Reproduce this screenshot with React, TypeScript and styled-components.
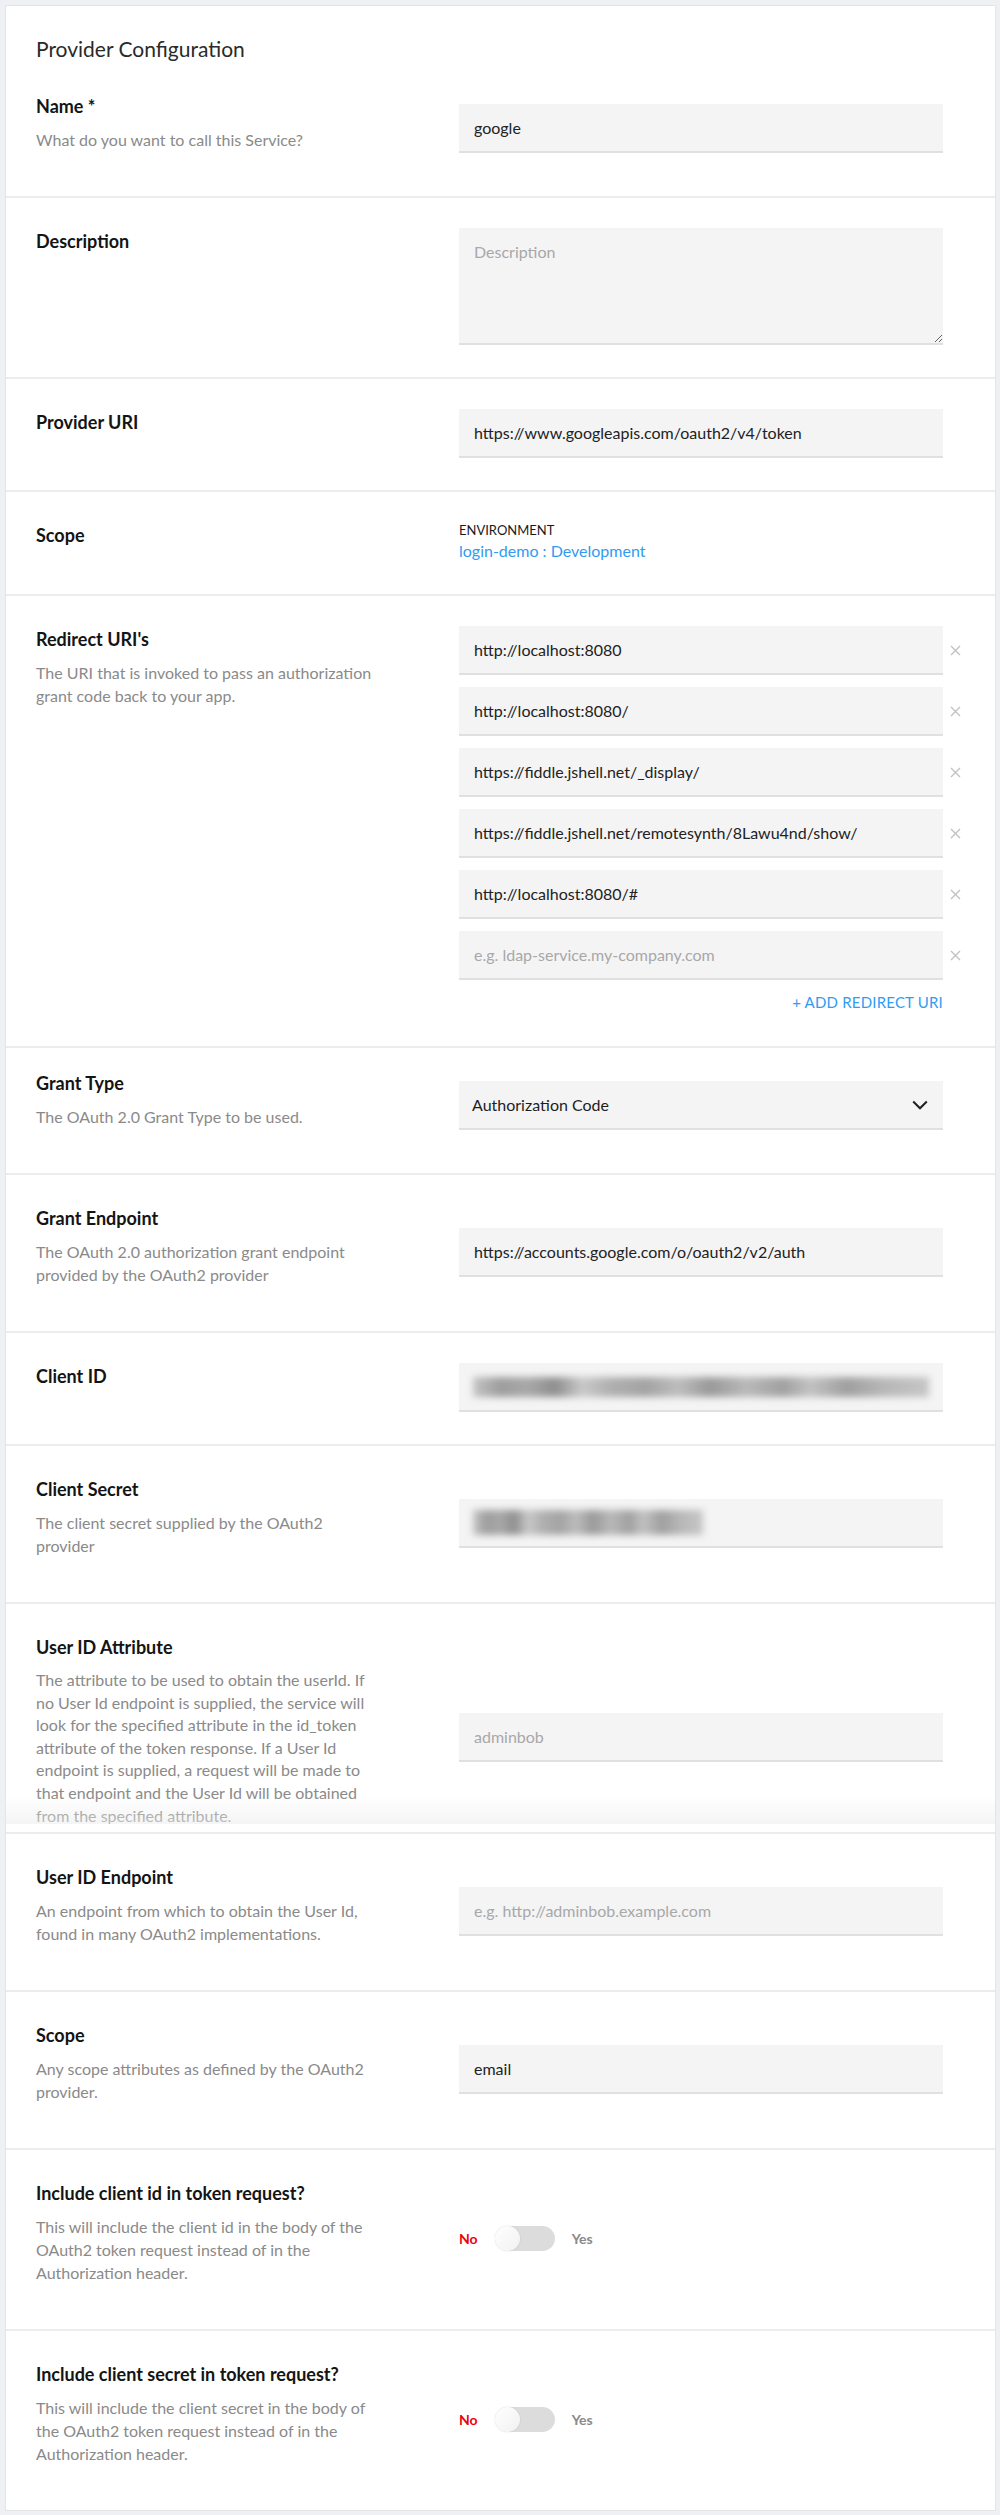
import * as React from "react";
import styled, { createGlobalStyle } from "styled-components";

const GlobalStyle = createGlobalStyle`
  html, body {
    margin: 0;
    background: #eef0f4;
  }
  body {
    padding: 5px 4px 2px 5px;
    font-family: Lato, "Liberation Sans", sans-serif;
    color: #222;
    -webkit-font-smoothing: antialiased;
  }
  * {
    box-sizing: border-box;
  }
`;

const SCard = styled.div`
  background: #fff;
  border: 1px solid #e3e5e9;
`;

const STitle = styled.h2`
  margin: 0;
  padding: 29px 30px 0;
  font-size: 21px;
  line-height: 28px;
  font-weight: 400;
  color: #2a2a2a;
`;

const SSection = styled.section<{ $clip?: boolean }>`
  border-bottom: 2px solid #ececec;
  padding-bottom: ${(p) => (p.$clip ? "8px" : "0")};
  &:last-child {
    border-bottom: 0;
  }
`;

const SClipWindow = styled.div`
  position: relative;
  height: 220px;
  overflow: hidden;
  &::after {
    content: "";
    position: absolute;
    left: 0;
    right: 0;
    bottom: 0;
    height: 28px;
    background: linear-gradient(
      to bottom,
      rgba(240, 240, 240, 0),
      rgba(236, 236, 236, 0.55)
    );
  }
`;

const SRow = styled.div<{ $top: number }>`
  display: grid;
  grid-template-columns: 423px 484px;
  padding: ${(p) => p.$top}px 0 32px 30px;
`;

const SInfo = styled.div`
  align-self: start;
  max-width: 345px;
  padding-bottom: 13px;
`;

const SLabel = styled.div`
  font-size: 18px;
  line-height: 27px;
  font-weight: 700;
  color: #141414;
`;

const SHint = styled.div<{ $tight?: boolean }>`
  margin-top: 8px;
  font-size: 16px;
  line-height: ${(p) => (p.$tight ? "22.6px" : "23px")};
  color: #8a8a8a;
`;

const SControl = styled.div`
  align-self: center;
  display: flex;
  flex-direction: column;
`;

const STextInput = styled.input`
  width: 100%;
  height: 49px;
  padding: 0 15px;
  border: 0;
  border-bottom: 2px solid #e0e0e2;
  background: #f4f4f5;
  font-family: inherit;
  font-size: 16px;
  color: #222;
  outline: none;
  &::placeholder {
    color: #a8a8a8;
  }
`;

const STextArea = styled.textarea`
  width: 100%;
  height: 117px;
  padding: 14px 15px;
  border: 0;
  border-bottom: 2px solid #e0e0e2;
  background: #f4f4f5;
  font-family: inherit;
  font-size: 16px;
  color: #222;
  outline: none;
  resize: vertical;
  display: block;
  &::placeholder {
    color: #a8a8a8;
  }
`;

const SUriList = styled.div`
  display: flex;
  flex-direction: column;
  gap: 12px;
`;

const SUriRow = styled.div`
  display: flex;
  align-items: center;
  margin-right: -24px;
`;

const SRemove = styled.button`
  flex: none;
  width: 24px;
  height: 24px;
  padding: 0;
  border: 0;
  background: none;
  display: flex;
  align-items: center;
  justify-content: center;
`;

const SAddLink = styled.a`
  align-self: flex-end;
  margin-top: 10px;
  font-size: 15px;
  line-height: 24px;
  color: #2f9cf2;
  text-transform: uppercase;
  text-decoration: none;
  letter-spacing: 0.2px;
`;

const SSelect = styled.div`
  height: 49px;
  padding: 0 15px 0 13px;
  display: flex;
  align-items: center;
  justify-content: space-between;
  background: #f4f4f5;
  border-bottom: 2px solid #e0e0e2;
  font-size: 16px;
  color: #1e1e1e;
`;

const SEnvCaption = styled.div`
  font-size: 13px;
  line-height: 16px;
  color: #1a1a1a;
  text-transform: uppercase;
`;

const SEnvLink = styled.a`
  margin-top: 2px;
  font-size: 16px;
  line-height: 22px;
  color: #2f9cf2;
  text-decoration: none;
`;

const SBlurField = styled.div`
  height: 49px;
  padding: 0 14px;
  display: flex;
  align-items: center;
  background: #f4f4f5;
  border-bottom: 2px solid #e0e0e2;
  overflow: hidden;
`;

// redacted value: streaky grey band, blurred like the screenshot
const SBlurred = styled.span<{ $width: number; $height: number }>`
  display: block;
  width: ${(p) => p.$width}px;
  height: ${(p) => p.$height}px;
  background: linear-gradient(
    90deg,
    #c4c4c4 0%,
    #9d9d9d 6%,
    #a8a8a8 12%,
    #8e8e8e 18%,
    #c9c9c9 24%,
    #b0b0b0 30%,
    #a3a3a3 38%,
    #bdbdbd 45%,
    #999 52%,
    #b9b9b9 60%,
    #a0a0a0 68%,
    #c2c2c2 74%,
    #9f9f9f 82%,
    #b7b7b7 90%,
    #c6c6c6 100%
  );
  filter: blur(3.5px);
`;

const SToggleGroup = styled.div`
  display: flex;
  align-items: center;
  gap: 17px;
  font-size: 14px;
  font-weight: 700;
`;

const SToggleText = styled.span<{ $active?: boolean }>`
  color: ${(p) => (p.$active ? "#f0000a" : "#8a8a8a")};
`;

const STrack = styled.div`
  width: 60px;
  height: 25px;
  border-radius: 13px;
  background: #dcdcdc;
  display: flex;
  align-items: center;
`;

const SKnob = styled.div`
  width: 25px;
  height: 25px;
  border-radius: 50%;
  background: linear-gradient(to bottom right, #ffffff, #f1f1f1);
  box-shadow: 0 0 2px rgba(0, 0, 0, 0.12);
`;

const CloseIcon = () => (
  <svg width="11" height="11" viewBox="0 0 11 11">
    <path d="M1 1 L10 10 M10 1 L1 10" stroke="#c2c2c2" strokeWidth="1.4" fill="none" />
  </svg>
);

const Chevron = () => (
  <svg width="16" height="10" viewBox="0 0 16 10">
    <path d="M1.2 1.5 L8 8.3 L14.8 1.5" stroke="#1e1e1e" strokeWidth="2" fill="none" />
  </svg>
);

interface FieldProps {
  label: string;
  hint?: string;
  top?: number;
  clip?: boolean;
  children?: React.ReactNode;
}

const Field = (props: FieldProps) => {
  const { label, hint, top = 30, clip, children } = props;
  const row = (
    <SRow $top={top}>
      <SInfo>
        <SLabel>{label}</SLabel>
        {hint && <SHint $tight={clip}>{hint}</SHint>}
      </SInfo>
      <SControl>{children}</SControl>
    </SRow>
  );
  return (
    <SSection $clip={clip}>{clip ? <SClipWindow>{row}</SClipWindow> : row}</SSection>
  );
};

const Toggle = () => (
  <SToggleGroup>
    <SToggleText $active>No</SToggleText>
    <STrack>
      <SKnob />
    </STrack>
    <SToggleText>Yes</SToggleText>
  </SToggleGroup>
);

const redirectUris = [
  "http://localhost:8080",
  "http://localhost:8080/",
  "https://fiddle.jshell.net/_display/",
  "https://fiddle.jshell.net/remotesynth/8Lawu4nd/show/",
  "http://localhost:8080/#",
  "",
];

const App = () => (
  <>
    <GlobalStyle />
    <SCard>
      <STitle>Provider Configuration</STitle>

      <Field label="Name *" hint="What do you want to call this Service?">
        <STextInput defaultValue="google" />
      </Field>

      <Field label="Description">
        <STextArea placeholder="Description" />
      </Field>

      <Field label="Provider URI">
        <STextInput defaultValue="https://www.googleapis.com/oauth2/v4/token" />
      </Field>

      <Field label="Scope">
        <SEnvCaption>Environment</SEnvCaption>
        <SEnvLink href="#">login-demo : Development</SEnvLink>
      </Field>

      <Field
        label="Redirect URI's"
        hint="The URI that is invoked to pass an authorization grant code back to your app."
      >
        <SUriList>
          {redirectUris.map((uri, i) => (
            <SUriRow key={i}>
              <STextInput
                defaultValue={uri}
                placeholder="e.g. ldap-service.my-company.com"
              />
              <SRemove>
                <CloseIcon />
              </SRemove>
            </SUriRow>
          ))}
        </SUriList>
        <SAddLink href="#">+ Add Redirect URI</SAddLink>
      </Field>

      <Field label="Grant Type" hint="The OAuth 2.0 Grant Type to be used." top={22}>
        <SSelect>
          Authorization Code
          <Chevron />
        </SSelect>
      </Field>

      <Field
        label="Grant Endpoint"
        hint="The OAuth 2.0 authorization grant endpoint provided by the OAuth2 provider"
      >
        <STextInput defaultValue="https://accounts.google.com/o/oauth2/v2/auth" />
      </Field>

      <Field label="Client ID">
        <SBlurField>
          <SBlurred $width={461} $height={20} />
        </SBlurField>
      </Field>

      <Field
        label="Client Secret"
        hint="The client secret supplied by the OAuth2 provider"
      >
        <SBlurField>
          <SBlurred $width={230} $height={25} />
        </SBlurField>
      </Field>

      <Field
        label="User ID Attribute"
        hint="The attribute to be used to obtain the userId. If no User Id endpoint is supplied, the service will look for the specified attribute in the id_token attribute of the token response. If a User Id endpoint is supplied, a request will be made to that endpoint and the User Id will be obtained from the specified attribute."
        clip
      >
        <STextInput placeholder="adminbob" />
      </Field>

      <Field
        label="User ID Endpoint"
        hint="An endpoint from which to obtain the User Id, found in many OAuth2 implementations."
      >
        <STextInput placeholder="e.g. http://adminbob.example.com" />
      </Field>

      <Field label="Scope" hint="Any scope attributes as defined by the OAuth2 provider.">
        <STextInput defaultValue="email" />
      </Field>

      <Field
        label="Include client id in token request?"
        hint="This will include the client id in the body of the OAuth2 token request instead of in the Authorization header."
      >
        <Toggle />
      </Field>

      <Field
        label="Include client secret in token request?"
        hint="This will include the client secret in the body of the OAuth2 token request instead of in the Authorization header."
      >
        <Toggle />
      </Field>
    </SCard>
  </>
);

export default App;
